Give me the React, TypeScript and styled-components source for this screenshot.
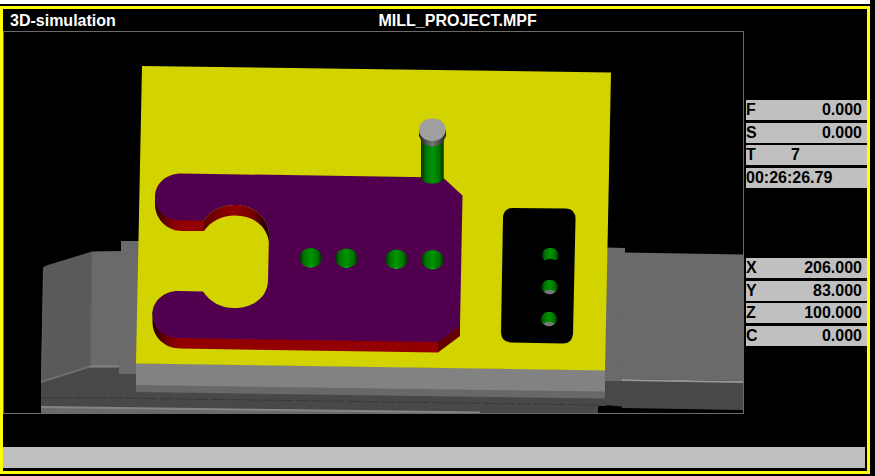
import React from "react";
import styled, { createGlobalStyle } from "styled-components";

const GlobalStyle = createGlobalStyle`
  * { box-sizing: border-box; }
  body {
    margin: 0;
    background: #000;
    font-family: "Liberation Sans", Arial, sans-serif;
    font-size: 16px;
    font-weight: bold;
    line-height: 20px;
  }
`;

const Screen = styled.div`
  display: flex;
  flex-direction: column;
  min-height: 100vh;
  padding: 0 5px 2px 0;
`;

const TopStrip = styled.div`
  height: 4px;
  margin-bottom: 2px;
  background: #fff;
`;

const Frame = styled.main`
  flex: 1;
  display: flex;
  flex-direction: column;
  border: 3px solid #ff0;
  padding-bottom: 3px;
`;

const TitleBar = styled.header`
  display: grid;
  grid-template-columns: 43% 1fr;
  padding: 2px 0 0 7px;
  color: #fff;
`;

const Title = styled.h1`
  margin: 0;
  font: inherit;
`;

const Workspace = styled.div`
  flex: 1;
  display: grid;
  grid-template-columns: minmax(0, 1fr) 121px;
  column-gap: 2px;
`;

const Viewport = styled.section`
  display: flex;
  border: 1px solid #6a6a6a;
  overflow: hidden;
`;

const Scene = styled.svg`
  display: block;
  flex: 1;
  width: 100%;
  min-width: 0;
`;

const Sidebar = styled.aside`
  display: flex;
  flex-direction: column;
  gap: 70px;
  padding-top: 69px;
`;

const Readouts = styled.dl`
  display: grid;
  align-content: space-between;
  height: 88px;
  margin: 0;
  color: #000;
`;

const Readout = styled.div<{ $align: "start" | "end" }>`
  display: grid;
  grid-template-columns: 45px 1fr;
  height: 20px;
  padding-right: 5px;
  background: #c0c0c0;
  text-align: ${(p) => p.$align};
`;

const Label = styled.dt`
  text-align: left;
`;

const Value = styled.dd`
  margin: 0;
`;

const Clock = styled.time`
  display: block;
  height: 20px;
  background: #c0c0c0;
  color: #000;
`;

const StatusLine = styled.footer`
  height: 21px;
  margin: 33px 2px 0 0;
  background: #c0c0c0;
`;

const holes = [
  [310.7, 257.8],
  [346.5, 258.2],
  [396.5, 259.3],
  [432.5, 259.6],
];

const drillHoles = [
  [549.7, 287],
  [549, 319],
];

function Simulation() {
  return (
    <Scene viewBox="4 32 739 381" role="img" aria-label="Milled workpiece">
      <defs>
        <linearGradient id="bore">
          <stop offset="0" stopColor="#003000" />
          <stop offset="0.2" stopColor="#007400" />
          <stop offset="0.5" stopColor="#009400" />
          <stop offset="0.8" stopColor="#007400" />
          <stop offset="1" stopColor="#003000" />
        </linearGradient>
        <linearGradient id="cap">
          <stop offset="0" stopColor="#222" />
          <stop offset="0.5" stopColor="#777" />
          <stop offset="1" stopColor="#222" />
        </linearGradient>
        <linearGradient id="lobe" gradientUnits="userSpaceOnUse" x1="152" y1="0" x2="178" y2="0">
          <stop offset="0" stopColor="#180000" />
          <stop offset="0.5" stopColor="#680000" />
          <stop offset="1" stopColor="#920000" />
        </linearGradient>
        <linearGradient id="arc" gradientUnits="userSpaceOnUse" x1="203" y1="0" x2="270" y2="0">
          <stop offset="0" stopColor="#5c0000" />
          <stop offset="0.45" stopColor="#920000" />
          <stop offset="0.75" stopColor="#740000" />
          <stop offset="1" stopColor="#100000" />
        </linearGradient>
      </defs>

      {/* machine table, left side */}
      <path d="M41 381L90 366H140V413H41Z" fill="#484848" />
      <path d="M43 268Q44 266 48 265L92 251.500V366L41 382Z" fill="#5a5a5a" />
      <path d="M91.500 251.500L121 251V241H140V374H119V367H90Z" fill="#6a6a6a" />
      <path d="M44 268L41.500 381M92 252L90.500 365" stroke="#626262" fill="none" />
      <path d="M41 382L90 366.500" stroke="#6e6e6e" strokeWidth="2" fill="none" />
      <path d="M90 366.500H119" stroke="#858585" strokeWidth="2" />

      {/* machine table, right side */}
      <path d="M604 380L743 382V410L622 408V406.500L604 405Z" fill="#484848" />
      <path d="M604 247.500L625 248V252.500L743 254.500V381L622 379V381H604Z" fill="#6a6a6a" />
      <path d="M624 256L622 378" stroke="#585858" strokeDasharray="1 11" />
      <path d="M622 380L743 382" stroke="#959595" strokeWidth="2" />

      {/* base below the workpiece */}
      <path d="M136 389L606 396V406H598V413H136Z" fill="#484848" />
      <path d="M41 407L480 413H41Z" fill="#6a6a6a" />
      <path d="M41 407L480 412.500" stroke="#858585" strokeWidth="2" />
      <path d="M41 397.500L119 398L598 405" stroke="#383838" strokeDasharray="14 3" fill="none" />

      {/* workpiece block */}
      <path d="M136 384L605 390V398.500L136 392Z" fill="#686868" />
      <path d="M136 363L605 370V391.500L136 385Z" fill="#828282" />
      <path d="M142 66L611 72.500L605 370.500L136 363.500Z" fill="#d3d300" />

      {/* outer pocket walls */}
      <path d="M155 196V204C155 220 168 231 182 231H204V218L182 210Z" fill="url(#lobe)" />
      <path d="M152.500 312V322C152.500 337 165 348.500 180 348.500L438 352.500V340L180 335Z" fill="url(#lobe)" />
      <path d="M438 341L460 325V336L438 352.500Z" fill="#640000" />

      {/* pocket floor */}
      <path
        d="M181 173.500L443 177.500L462.500 195.500L460 326L438 342L180 338C163 338 152.500 328 152.500 314C152.500 301 164 291 178 291L203 291.500C210 302 221 308 234 308C253 308 268 297 268 280L269 234C268 217 253 205 235 205C222 205 211 210 204 220.500H182C166 220.500 155 211 155 197C155 183 167 173.500 181 173.500Z"
        fill="#50004f"
      />

      {/* round wall around the island */}
      <path
        d="M204 231V220.500C211 210 222 205 235 205C253 205 268 217 269 234V242C267 226 253 215.500 235 215.500C222 215.500 211 221 204 231Z"
        fill="url(#arc)"
      />

      {holes.map(([x, y]) => (
        <g key={x}>
          <ellipse cx={x} cy={y} rx="11.300" ry="9.700" fill="url(#bore)" />
          <path d={`M${x - 2} ${y + 9}h4`} stroke="#00c030" />
        </g>
      ))}

      {/* through pocket with drill holes */}
      <path
        d="M512 208L566 208.500Q575.500 209 575.500 219L573 334Q572 343.500 563 343.500L511 342.500Q501 342 501 332L503 217Q504 208 512 208Z"
        fill="#000"
      />
      <path d="M542 255C542 245.500 558.500 245.500 558.500 255Q558.500 259 556 260.500Q550 257 544.500 260.500Q542 259 542 255Z" fill="url(#bore)" />
      {drillHoles.map(([x, y]) => (
        <g key={y}>
          <ellipse cx={x} cy={y} rx="8.300" ry="7.200" fill="url(#bore)" />
          <path d={`M${x - 6} ${y + 4.5}Q${x} ${y + 1} ${x + 6} ${y + 4.5}Q${x} ${y + 10} ${x - 6} ${y + 4.5}Z`} fill="#777" />
        </g>
      ))}

      {/* cutter */}
      <path d="M421 136H443.700V178C443 181.500 438 183.500 432.500 183.500S422 181.500 421 178Z" fill="url(#bore)" />
      <path d="M419 130V136L422 142Q432 151 443 142L446 136V130Z" fill="url(#cap)" />
      <ellipse cx="432.300" cy="129.700" rx="13.400" ry="11.300" fill="#9f9f9f" />
    </Scene>
  );
}

type Entry = { label: string; value: string; align?: "start" | "end" };

const technology: Entry[] = [
  { label: "F", value: "0.000" },
  { label: "S", value: "0.000" },
  { label: "T", value: "7", align: "start" },
];

const axes: Entry[] = [
  { label: "X", value: "206.000" },
  { label: "Y", value: "83.000" },
  { label: "Z", value: "100.000" },
  { label: "C", value: "0.000" },
];

function ReadoutRow({ label, value, align = "end" }: Entry) {
  return (
    <Readout $align={align}>
      <Label>{label}</Label>
      <Value>{value}</Value>
    </Readout>
  );
}

export default function App() {
  return (
    <>
      <GlobalStyle />
      <Screen>
        <TopStrip />
        <Frame>
          <TitleBar>
            <Title>3D-simulation</Title>
            <span>MILL_PROJECT.MPF</span>
          </TitleBar>
          <Workspace>
            <Viewport>
              <Simulation />
            </Viewport>
            <Sidebar>
              <Readouts>
                {technology.map((entry) => (
                  <ReadoutRow key={entry.label} {...entry} />
                ))}
                <Clock>00:26:26.79</Clock>
              </Readouts>
              <Readouts>
                {axes.map((entry) => (
                  <ReadoutRow key={entry.label} {...entry} />
                ))}
              </Readouts>
            </Sidebar>
          </Workspace>
          <StatusLine />
        </Frame>
      </Screen>
    </>
  );
}
